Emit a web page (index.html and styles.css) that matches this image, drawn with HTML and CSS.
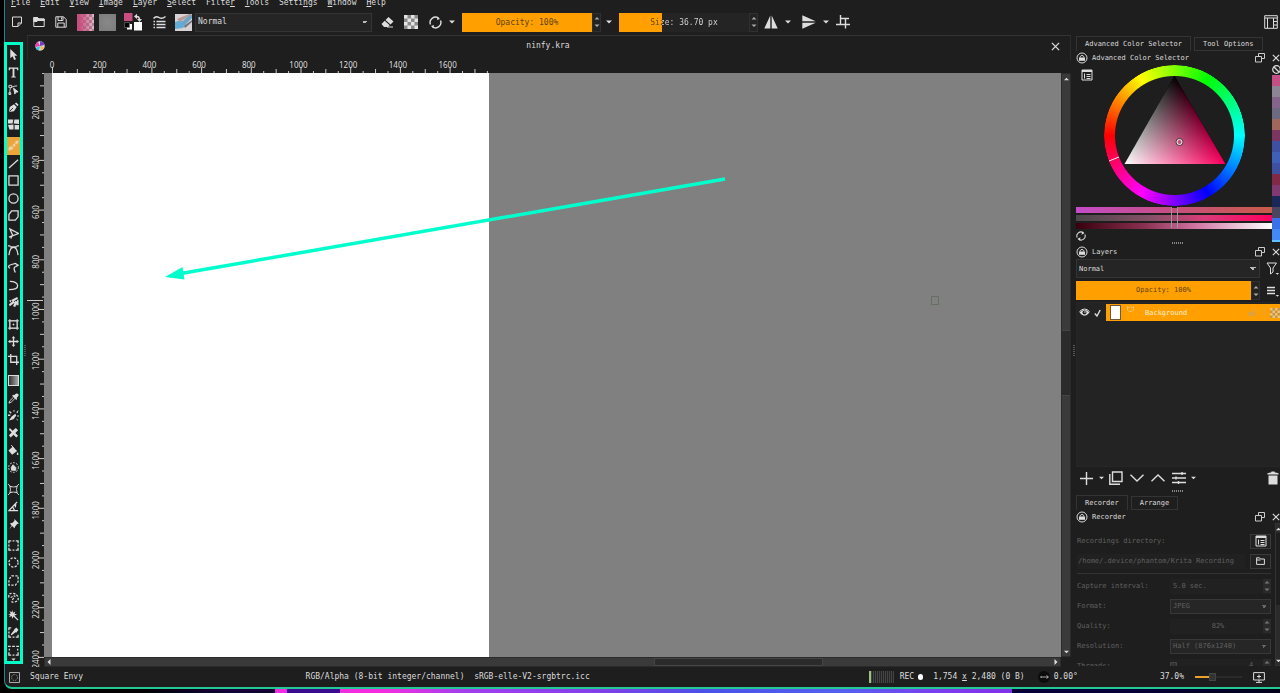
FILE: index.html
```html
<!DOCTYPE html>
<html lang="en">
<head>
<meta charset="utf-8">
<title>ninfy.kra</title>
<link rel="stylesheet" href="styles.css">
</head>
<body>
<svg class="defs" aria-hidden="true">
  <symbol id="down" viewBox="0 0 6 4"><path d="M0 0.5H6L3 3.5Z"/></symbol>
  <symbol id="spin" viewBox="0 0 8 18"><path d="M1.500 6.500H6.500L4 4Z M1.500 11.500H6.500L4 14Z"/></symbol>
  <symbol id="lock" viewBox="0 0 12 12"><circle cx="6" cy="6" r="5" fill="none" stroke="#d8d8d8"/><path d="M3 5.500H9V8.800H3Z"/><path d="M4.200 5.500V4.500Q6 2 7.800 4.500V5.500" fill="none" stroke="#d8d8d8"/></symbol>
  <symbol id="float" viewBox="0 0 10 10"><path d="M3.500 3.500V.5H9.500V5.500H6.500M.5 3.500H6.500V9H.5Z" fill="none" stroke="#ccc"/></symbol>
  <symbol id="x" viewBox="0 0 10 10"><path d="M1 1L9 9M9 1L1 9" fill="none" stroke="#ddd" stroke-width="1.400"/></symbol>
  <symbol id="listbox" viewBox="0 0 12 12"><path d="M1 1H11V11H1Z" fill="none" stroke="#ddd"/><path d="M1 1H11V3H1ZM3 4.500H4V9.500H3ZM5.500 5H9.500V6H5.500ZM5.500 7H9.500V8H5.500ZM5.500 9H9.500V10H5.500Z"/></symbol>
  <symbol id="checks" viewBox="0 0 14 14"><path d="M0 0H14V14H0Z" fill="#8a8a8a"/><path d="M0 0H3.500V3.500H0ZM7 0H10.500V3.500H7ZM3.500 3.500H7V7H3.500ZM10.500 3.500H14V7H10.500ZM0 7H3.500V10.500H0ZM7 7H10.500V10.500H7ZM3.500 10.500H7V14H3.500ZM10.500 10.500H14V14H10.500Z" fill="#e4e4e4"/></symbol>
</svg>

<div class="window">
  <nav class="menubar">
    <button><u>F</u>ile</button><button><u>E</u>dit</button><button><u>V</u>iew</button><button><u>I</u>mage</button><button><u>L</u>ayer</button><button><u>S</u>elect</button><button>Filte<u>r</u></button><button><u>T</u>ools</button><button>Setti<u>n</u>gs</button><button><u>W</u>indow</button><button><u>H</u>elp</button>
  </nav>

  <div class="toolbar">
    <button class="tb" aria-label="New"><svg width="12" height="12" viewBox="0 0 12 12" class="ln"><path d="M1.500 1H10.500V7L7 10.500H1.500ZM10.500 7H7V10.500"/></svg></button>
    <button class="tb" aria-label="Open"><svg width="12" height="12" viewBox="0 0 12 12" class="ln"><path d="M.8 10.500V1.500H4.500L6 3H11.200V10.500Z"/><path d="M.8 1.500H4.500L6 3H11.200V4.500H5L4 5.500H.8Z" fill="#ddd"/></svg></button>
    <button class="tb" aria-label="Save"><svg width="12" height="12" viewBox="0 0 12 12" class="ln"><path d="M.8.8H8.500L11.200 3.500V11.200H.8ZM3 .8V4.500H8V.8M2.800 11V7H9.200V11M6.500 1.500V3.500"/></svg></button>
    <button class="tb s2" aria-label="Gradient"><span class="gradient-swatch"></span></button>
    <button class="tb" aria-label="Pattern"><span class="pattern-swatch"></span></button>
    <button class="tb wide" aria-label="Foreground and background colors"><svg width="18" height="18" viewBox="0 0 18 18"><path d="M0 0H8.500V8H0Z" fill="#c74f7f"/><path d="M10 9H18V17.500H10Z" fill="#fff"/><path d="M3 11H8V16.500H3Z" fill="#fff"/><path d="M.5 9.500H5.500V14.500H.5Z" fill="#050505" stroke="#777" stroke-width=".6"/><path d="M12 3.500Q15.500 3 15.500 7" fill="none" stroke="#ddd" stroke-width="1.500"/><path d="M10 3.500L13 .8V6ZM13 6H18L15.500 9Z" fill="#ddd"/></svg></button>
    <button class="tb" aria-label="Edit brush settings"><svg width="13" height="14" viewBox="0 0 13 14" class="ln th"><path d="M.5 3.500Q3 .5 6 2.500T12.500 1.500M.5 6.500H2M3.500 6.500H12.500M.5 9.500H2M3.500 9.500H12.500M.5 12.500H2M3.500 12.500H12.500"/></svg></button>
    <button class="tb s2" aria-label="Brush preset"><svg width="17" height="17" viewBox="0 0 17 17"><path d="M0 0H17V17H0Z" fill="#d9d2d4"/><path d="M0 8L6 6 11 10 8 14 0 15Z" fill="#62acd8"/><path d="M7 8L14 1 17 1V4L10 11Z" fill="#6aa5c6"/><path d="M2 5L14 0H17L5 8Z" fill="#b99c98"/><path d="M9 12L17 6V8L10 14Z" fill="#7b6f7c"/></svg></button>
    <select class="combo blend" aria-label="Blending mode"><option>Normal</option></select>
    <button class="tb s4" aria-label="Eraser"><svg width="13" height="13" viewBox="0 0 13 13"><path d="M7.500 1L12.500 5.500 9.500 8.500 4.500 4ZM3.700 4.800L8.700 9.300 7 11H3L.5 8Z"/><path d="M6 11H12" stroke="#ddd"/></svg></button>
    <button class="tb s2" aria-label="Preserve alpha"><svg width="14" height="14"><use href="#checks"/></svg></button>
    <button class="tb s2" aria-label="Reload preset"><svg width="13" height="13" viewBox="0 0 13 13" class="ln th"><path d="M1.500 8.500A5.300 5.300 0 0 1 9.500 2.200M11.500 4.500A5.300 5.300 0 0 1 3.500 10.800"/><path d="M8.500 .5L11 3 8 4ZM4.500 12.500L2 10 5 9Z" fill="#ddd" stroke="none"/></svg></button>
    <button class="drop" aria-label="Preset options"><svg width="6" height="4"><use href="#down"/></svg></button>
    <label class="slider s4"><input type="range" min="0" max="100" value="100" class="full"><span class="full">Opacity: 100%</span></label>
    <button class="spin" aria-label="Step opacity"><svg width="8" height="18"><use href="#spin"/></svg></button>
    <button class="drop s2" aria-label="Opacity options"><svg width="6" height="4"><use href="#down"/></svg></button>
    <label class="slider s4"><input type="range" min="0" max="100" value="33" class="third"><span class="third">Size: 36.70 px</span></label>
    <button class="spin" aria-label="Step size"><svg width="8" height="18"><use href="#spin"/></svg></button>
    <button class="tb s2" aria-label="Mirror horizontally"><svg width="14" height="14" viewBox="0 0 14 14"><path d="M6.300 .5V13.500H.3ZM7.700 .5V13.500H13.700Z"/></svg></button>
    <button class="drop" aria-label="Mirror options"><svg width="6" height="4"><use href="#down"/></svg></button>
    <button class="tb s4" aria-label="Mirror vertically"><svg width="14" height="14" viewBox="0 0 14 14"><path d="M.3 .3L13.700 6.300H.3ZM.3 7.700H13.700L.3 13.700Z"/></svg></button>
    <button class="drop" aria-label="Vertical mirror options"><svg width="6" height="4"><use href="#down"/></svg></button>
    <button class="tb" aria-label="Wrap around"><svg width="14" height="14" viewBox="0 0 14 14" class="ln th"><path d="M4.500 3.500H9.500V13.500M4.500 0V9.500H14M0 9.500H4.500M7 3.500H13"/></svg></button>
    <button class="tb last" aria-label="Workspaces"><svg width="14" height="14" viewBox="0 0 14 14" class="ln"><path d="M.7 .7H13.300V13.300H.7ZM.7 3H13.300M3.500 3V13M9.500 3V13M9.500 6.500H13M9.500 10H13"/></svg></button>
  </div>

  <div class="main">
    <div class="toolbox">
      <button aria-label="Select shapes"><svg viewBox="0 0 12 12"><path d="M2.500 0V10L5 8 6.800 12 8.700 11.200 7 7.300H10.200Z"/></svg></button>
      <button aria-label="Text"><svg viewBox="0 0 12 12"><path d="M.8 .5H11.200V3.500H10L9.500 2H7V10L8.500 10.500V11.500H3.500V10.500L5 10V2H2.500L2 3.500H.8Z"/></svg></button>
      <button aria-label="Edit shapes"><svg viewBox="0 0 12 12" class="ln"><path d="M2 11V7Q2 2.500 10 2M1 1.500H4V4H1ZM1 9.500H3V11.500H1Z"/><path d="M6 4.500L11 8.500 8.500 9 7.500 11Z" fill="#ddd"/></svg></button>
      <button aria-label="Calligraphy"><svg viewBox="0 0 12 12"><path d="M1 11L2 5.500 6.500 2.500 9.500 5.500 6.500 10ZM7.500 1.500L9 .5 11.500 3 10.500 4.500Z"/><path d="M1.500 10.500L5.500 6.500" stroke="#222"/></svg></button>
      <button aria-label="Lazy brush"><svg viewBox="0 0 12 12"><path d="M0 .5H5.800L5 5H0ZM7 .5H12V5.500L6.200 5ZM0 6.500L6 6V11.500H1.500ZM7.200 6.500H12V11.500H7.200Z"/></svg></button>
      <hr>
      <button class="active" aria-label="Freehand brush"><svg viewBox="0 0 12 12"><path d="M.5 11.500Q0 7 3.500 6.500L6 8.500Q5.500 11.500.5 11.500ZM4.500 5.500L7 3.500 8.500 5.500 6.800 7.800ZM7.500 3Q8 0 11.500.5 12 3.500 9 5Z" fill="#efd0a0"/></svg></button>
      <button aria-label="Line"><svg viewBox="0 0 12 12" class="ln th"><path d="M1 11L11 2"/></svg></button>
      <button aria-label="Rectangle"><svg viewBox="0 0 12 12" class="ln th"><path d="M1 1H11V11H1Z"/></svg></button>
      <button aria-label="Ellipse"><svg viewBox="0 0 12 12" class="ln th"><circle cx="6" cy="6" r="5"/></svg></button>
      <button aria-label="Polygon"><svg viewBox="0 0 12 12" class="ln th"><path d="M4 1H11V7.500L8 11H1V5Z"/></svg></button>
      <button aria-label="Polyline"><svg viewBox="0 0 12 12" class="ln th"><path d="M3 11.500L5 7.500 2 1 11.500 6 1 10"/></svg></button>
      <button aria-label="Bezier curve"><svg viewBox="0 0 12 12" class="ln th"><path d="M1 11Q2 2.500 6 2.500T11 11M0 1H2.500M9.500 1H12M2 2H10"/></svg></button>
      <button aria-label="Freehand path"><svg viewBox="0 0 12 12" class="ln th"><path d="M2 7Q-1 4 3 3L8 1.500 11 3.500 8.500 5Q5 5.500 8 11.500"/></svg></button>
      <button aria-label="Dynamic brush"><svg viewBox="0 0 12 12" class="ln th"><path d="M2 1.500Q10 1.500 10.500 6T1 10.500"/></svg></button>
      <button aria-label="Multibrush"><svg viewBox="0 0 12 12"><path d="M4 3L10 0 11 2 5 5.500ZM1 8L6 4 7.500 6 2 10ZM5.500 10L8 4 10 5 8 11ZM9 9L10 3 11.500 3V9ZM1 4L4 3 3 6Z"/></svg></button>
      <hr>
      <button aria-label="Transform"><svg viewBox="0 0 12 12" class="ln"><path d="M2 2H10V10H2ZM0 2H12M0 10H12M2 0V12M10 0V12M5 6H7M6 5V7"/></svg></button>
      <button aria-label="Move"><svg viewBox="0 0 12 12"><path d="M6 0L8 2.500H6.700V5.300H9.500V4L12 6 9.500 8V6.700H6.700V9.500H8L6 12 4 9.500H5.300V6.700H2.500V8L0 6 2.500 4V5.300H5.300V2.500H4Z"/></svg></button>
      <button aria-label="Crop"><svg viewBox="0 0 12 12" class="ln th"><path d="M3 0V9H12M0 2.500H9.500V12"/></svg></button>
      <hr>
      <button aria-label="Gradient"><span class="gradient-tool"></span></button>
      <button aria-label="Color sampler"><svg viewBox="0 0 12 12"><path d="M6.500 2.500L9 .5Q12 .3 11.500 3L9.500 5.500 10 6.500 9 7.500 4.500 3 5.500 2Z"/><path d="M6 4.500L2 8.500 1 11 3.500 10 7.500 6" fill="none" stroke="#ddd"/></svg></button>
      <button aria-label="Colorize mask"><svg viewBox="0 0 12 12"><path d="M1 11.500L4 7 8 4 9 6 6 10ZM9 2.500L11.500 0 10.500 3.500ZM0 5H2.500V6.500H0ZM2 1L4 3 3 4 1 2ZM6 0H7V2H6ZM10 6H12V7H10ZM9 9L11 11 10 11.500Z"/></svg></button>
      <button aria-label="Smart patch"><svg viewBox="0 0 12 12"><path d="M2 1L5 4 8.500 1 11 3.500 8 6.500 11 9.500 9 11.500 6 8.500 3 11.500 1 9 4 6 1 3Z"/></svg></button>
      <button aria-label="Fill"><svg viewBox="0 0 12 12"><path d="M5 2L10 6.500 4.500 10.500 .5 6ZM10.500 7.500Q12.500 11 10.500 11T10.500 7.500Z"/><path d="M3.500 0L7 4" stroke="#ddd"/></svg></button>
      <button aria-label="Enclose and fill"><svg viewBox="0 0 12 12" class="ln"><circle cx="6" cy="6" r="5.300" stroke-dasharray="2 1.400"/><path d="M3.500 6L5.500 3 8.500 6V9H4Z" fill="#ddd"/></svg></button>
      <hr>
      <button aria-label="Assistant"><svg viewBox="0 0 12 12" class="ln"><path d="M0 0L3.500 3.500M12 0L8.500 3.500M0 12L3.500 8.500M12 12L8.500 8.500M2 2.500Q6 4 10 2.500Q8.500 6 10 9.500Q6 8 2 9.500Q3.500 6 2 2.500"/></svg></button>
      <button aria-label="Measure"><svg viewBox="0 0 12 12" class="ln th"><path d="M10 1L1 10.500H11M8.500 2.500L8 7M5 6.500L7 10"/></svg></button>
      <button aria-label="Reference images"><svg viewBox="0 0 12 12"><path d="M7 0L12 5 10 5.500 8 8 7 10 4.500 7.500 1 11.500 4 7 2 5 5 4 7 2Z"/></svg></button>
      <hr>
      <button aria-label="Rectangular selection"><svg viewBox="0 0 12 12" class="ln th"><path d="M1 3.500V1H3.500M8.500 1H11V3.500M11 8.500V11H8.500M3.500 11H1V8.500M5 1H7M5 11H7M1 5V7M11 5V7"/></svg></button>
      <button aria-label="Elliptical selection"><svg viewBox="0 0 12 12" class="ln th"><circle cx="6" cy="6" r="5" stroke-dasharray="2.400 1.530"/></svg></button>
      <button aria-label="Polygonal selection"><svg viewBox="0 0 12 12" class="ln th"><path d="M4 1H11V7.500L8 11H1V5Z" stroke-dasharray="2.500 1.500"/></svg></button>
      <button aria-label="Freehand selection"><svg viewBox="0 0 12 12" class="ln th"><path d="M1 6Q0 1 5 1.500T11 6 7 11 6 7 3 6" stroke-dasharray="2.500 1.400"/></svg></button>
      <button aria-label="Contiguous selection"><svg viewBox="0 0 12 12"><path d="M4.500 0L5.500 3 8 1.500 7 4 10 5 7 6 11.500 10.500 10.500 11.500 6 7 4.500 9.500 4 6.500 1 8 2.500 5.500 0 4.500 3 4 1.500 1 4 2.500Z"/></svg></button>
      <button aria-label="Similar color selection"><svg viewBox="0 0 12 12" class="ln th"><path d="M1 3.500V1H3.500M11 8.500V11H8.500M3.500 11H1V8.500M5 11H7M1 5V7"/><path d="M3.500 8.500L7 4 8 5ZM7.500 3L9 1.500 10.500 3 9 5Z" fill="#ddd"/></svg></button>
      <button aria-label="Bezier selection"><svg viewBox="0 0 12 12" class="ln th"><path d="M0 1.500H3M4.500 1.500H7.500M9 1.500H12M1.500 4V6M10.500 4V6M1 8V11H3.500M5 11H7M8.500 11H11V8"/></svg></button>
      <i class="more"><svg width="5" height="3" viewBox="0 0 6 4"><use href="#down"/></svg></i>
    </div>
    <div class="grip-v narrow-grip"></div>

    <section class="document">
      <header class="doc-title">
        <svg width="10" height="10" viewBox="0 0 10 10"><circle cx="5" cy="5" r="4.700" fill="#ddd"/><path d="M5 5V.3A4.700 4.700 0 0 1 9.500 4Z" fill="#7a3bc4"/><path d="M5 5L.5 6A4.700 4.700 0 0 1 3 .8Z" fill="#e83eae"/><path d="M5 5L9.500 6A4.700 4.700 0 0 1 6 9.600Z" fill="#e9b85f"/><path d="M5 5L4 9.600A4.700 4.700 0 0 1 .8 7Z" fill="#37c6e6"/></svg>
        <span>ninfy.kra</span>
        <button aria-label="Close document"><svg width="9" height="9"><use href="#x"/></svg></button>
      </header>
      <svg class="ruler-h" id="ruler-h"></svg>
      <svg class="ruler-v" id="ruler-v"></svg>
      <div class="canvas">
        <div class="page"></div>
        <svg class="overlay"><path d="M681 106L134 201" stroke="#0fc" stroke-width="3.500"/><path d="M121 204L138.500 194 140.500 206.500Z" fill="#0fc"/><path d="M887.500 223.500H894.500V231.500H887.500Z" fill="none" stroke="#63705f"/></svg>
      </div>
      <div class="scroll-v"><svg width="5" height="4" viewBox="0 0 6 4"><path d="M0 3.500H6L3 .5Z"/></svg><i></i><svg width="5" height="4"><use href="#down"/></svg></div>
      <div class="scroll-h"><svg width="4" height="6" viewBox="0 0 4 6"><path d="M3.500 0V6L.5 3Z"/></svg><i></i><svg width="4" height="6" viewBox="0 0 4 6"><path d="M.5 0V6L3.500 3Z"/></svg></div>
    </section>
    <div class="grip-v wide-grip"></div>

    <aside class="dock">
      <div class="tabs"><button class="on">Advanced Color Selector</button><button>Tool Options</button></div>
      <div class="dock-title"><svg width="12" height="12"><use href="#lock"/></svg><span>Advanced Color Selector</span><button aria-label="Float"><svg width="10" height="10"><use href="#float"/></svg></button><button aria-label="Close"><svg width="8" height="8"><use href="#x"/></svg></button></div>
      <div class="selector">
        <div class="selector-main">
          <button class="selector-config" aria-label="Color selector settings"><svg width="12" height="12"><use href="#listbox"/></svg></button>
          <div class="wheel">
            <div class="ring"></div>
            <svg viewBox="0 0 141 141" width="141" height="141">
              <defs>
                <linearGradient id="gh" gradientUnits="userSpaceOnUse" x1="45" y1="56" x2="121" y2="99"><stop stop-color="#000"/><stop offset="1" stop-color="#ff0060"/></linearGradient>
                <linearGradient id="gw" gradientUnits="userSpaceOnUse" x1="96" y1="56" x2="20" y2="99"><stop stop-color="#000"/><stop offset="1" stop-color="#fff"/></linearGradient>
              </defs>
              <g class="triangle"><path d="M70.500 11L20.500 99H121.500Z" fill="url(#gh)"/><path d="M70.500 11L20.500 99H121.500Z" fill="url(#gw)" class="add"/></g>
              <circle cx="75.500" cy="77" r="3.500" fill="none" stroke="#444"/><circle cx="75.500" cy="77" r="2.500" fill="none" stroke="#eee"/>
              <path d="M5 96L15 92" stroke="#eee"/>
            </svg>
          </div>
          <div class="bars"><i class="b1"></i><i class="b2"></i><i class="b3"></i><b></b></div>
          <button class="refresh" aria-label="Refresh"><svg width="10" height="10" viewBox="0 0 13 13" class="ln th"><path d="M1.500 8.500A5.300 5.300 0 0 1 9.500 2.200M11.500 4.500A5.300 5.300 0 0 1 3.500 10.800"/><path d="M8.500 .5L11 3 7 5ZM4.500 12.500L2 10 6 8Z" fill="#ddd" stroke="none"/></svg></button>
        </div>
        <div class="history">
          <svg width="9" height="9" viewBox="0 0 10 10" class="ln th"><circle cx="5" cy="5" r="4.200"/><path d="M2 2L8 8"/></svg>
          <i class="c1"></i><i class="c2"></i><i class="c3"></i><i class="c4"></i><i class="c5"></i><i class="c6"></i><i class="c7"></i><i class="c8"></i><i class="c7"></i><i class="c9"></i><i class="c10"></i><i class="c11"></i><i class="c12"></i><i class="c13"></i><i class="c14"></i><i class="c15"></i>
        </div>
      </div>
      <div class="grip-h"></div>

      <div class="dock-title"><svg width="12" height="12"><use href="#lock"/></svg><span>Layers</span><button aria-label="Float"><svg width="10" height="10"><use href="#float"/></svg></button><button aria-label="Close"><svg width="8" height="8"><use href="#x"/></svg></button></div>
      <div class="row"><select class="combo" aria-label="Layer blending mode"><option>Normal</option></select><button class="side" aria-label="Filter layers"><svg width="13" height="13" viewBox="0 0 13 13" class="ln"><path d="M1 1H10.500L7 6V10L4.500 12V6Z"/><path d="M9.500 11H13L11.500 12.800Z" fill="#ddd" stroke="none"/></svg></button></div>
      <div class="row"><label class="slider"><input type="range" min="0" max="100" value="100" class="full"><span class="full">Opacity: 100%</span></label><button class="spin" aria-label="Step layer opacity"><svg width="8" height="18"><use href="#spin"/></svg></button><button class="side" aria-label="Layer view options"><svg width="13" height="13" viewBox="0 0 13 13" class="ln th"><path d="M1 3.500H9M1 6.500H9M1 9.500H9"/><path d="M9.500 11H13L11.500 12.800Z" fill="#ddd" stroke="none"/></svg></button></div>
      <div class="layers">
        <div class="layer">
          <svg width="11" height="9" viewBox="0 0 11 9"><path d="M.5 4.500Q5.500-1 10.500 4.500 5.500 11 .5 4.500Z"/><circle cx="5.500" cy="4.500" r="2" fill="#222"/><circle cx="6" cy="4" r=".8"/><path d="M.5 3.500Q5.500-1.500 10.500 3.500" fill="none" stroke="#ddd"/></svg>
          <svg width="7" height="8" viewBox="0 0 7 8" class="ln th"><path d="M.8 4.500L3 7 6.200 1"/></svg>
          <div class="layer-name"><i class="thumb"></i><svg width="7" height="6" viewBox="0 0 7 6" class="badge"><path d="M.5 .5L2 2 3.500.5 5 2 6.500.5V4L5 5.500H2L.5 4Z"/></svg><span>Background</span><svg width="9" height="9" viewBox="0 0 9 9" class="faint"><path d="M1 4H8V8H1ZM6 1H8V4H6Z"/></svg><svg width="8" height="8" viewBox="0 0 8 8" class="badge pale"><path d="M1 1H5.500V5.500H1ZM5 5L7.500 7.500"/></svg><svg width="10" height="10" class="fade"><use href="#checks"/></svg></div>
        </div>
      </div>
      <div class="layer-tools">
        <button aria-label="Add layer"><svg width="13" height="13" viewBox="0 0 13 13" class="ln th"><path d="M6.500 0V13M0 6.500H13"/></svg></button>
        <button aria-label="Add options" class="narrow"><svg width="5" height="4"><use href="#down"/></svg></button>
        <button aria-label="Duplicate"><svg width="14" height="14" viewBox="0 0 14 14" class="ln th"><path d="M3.500 1H13V10.500H3.500ZM.8 3V13.200H11"/></svg></button>
        <button aria-label="Move down"><svg width="14" height="8" viewBox="0 0 14 8" class="ln th"><path d="M.5 .8L7 7 13.500 .8"/></svg></button>
        <button aria-label="Move up"><svg width="14" height="8" viewBox="0 0 14 8" class="ln th"><path d="M.5 7.200L7 1 13.500 7.200"/></svg></button>
        <button aria-label="Properties"><svg width="14" height="12" viewBox="0 0 14 12" class="ln th"><path d="M0 1.500H14M0 6H14M0 10.500H14M10 0V3M4 4.500V7.500M6.500 9V12"/></svg></button>
        <button aria-label="Property options" class="narrow"><svg width="5" height="4"><use href="#down"/></svg></button>
        <button aria-label="Delete" class="trash"><svg width="12" height="14" viewBox="0 0 12 14"><path d="M.3 2.500Q2 1.500 4 1.500L4.500.5H7.500L8 1.500Q10 1.500 11.700 2.500V3.500H.3ZM1.500 4.500H10.500V13.500H1.500Z"/></svg></button>
      </div>
      <div class="grip-h low"></div>

      <div class="tabs"><button class="on">Recorder</button><button>Arrange</button></div>
      <div class="dock-title"><svg width="12" height="12"><use href="#lock"/></svg><span>Recorder</span><button aria-label="Float"><svg width="10" height="10"><use href="#float"/></svg></button><button aria-label="Close"><svg width="8" height="8"><use href="#x"/></svg></button></div>
      <div class="recorder">
        <form>
          <div class="line"><label for="dir">Recordings directory:</label><button type="button" class="box" aria-label="Manage recordings"><svg width="12" height="12"><use href="#listbox"/></svg></button></div>
          <div class="line"><input id="dir" type="text" value="/home/.device/phantom/Krita Recording" disabled><button type="button" class="box" aria-label="Browse"><svg width="9" height="8" viewBox="0 0 9 8" class="ln"><path d="M.6 7.400V.8H3.500L4.500 2H8.400V7.400ZM.6 3H4.500"/></svg></button></div>
          <hr>
          <div class="line"><label for="interval">Capture interval:</label><div class="field"><input id="interval" type="text" value="5.0 sec." disabled><svg width="8" height="14" viewBox="0 2 8 14" class="mini"><use href="#spin" width="8" height="18"/></svg></div></div>
          <div class="line"><label for="format">Format:</label><select id="format" class="combo dim" disabled><option>JPEG</option></select></div>
          <div class="line"><label for="quality">Quality:</label><div class="field"><input id="quality" type="text" class="mid" value="82%" disabled><svg width="8" height="14" viewBox="0 2 8 14" class="mini"><use href="#spin" width="8" height="18"/></svg></div></div>
          <div class="line"><label for="res">Resolution:</label><select id="res" class="combo dim" disabled><option>Half (876x1240)</option></select></div>
          <div class="line"><label for="threads">Threads:</label><div class="field"><input id="threads" type="range" value="0" disabled><output>4</output><svg width="8" height="14" viewBox="0 2 8 14" class="mini"><use href="#spin" width="8" height="18"/></svg></div></div>
        </form>
        <div class="rec-scroll"><svg width="5" height="4" viewBox="0 0 6 4"><path d="M0 3.500H6L3 .5Z"/></svg><i></i><svg width="5" height="4"><use href="#down"/></svg></div>
      </div>
    </aside>
  </div>

  <footer class="status">
    <svg width="11" height="11" viewBox="0 0 11 11"><path d="M.5 .5H10.500V10.500H.5Z" fill="none" stroke="#aaa"/><circle cx="5.500" cy="5.500" r="3" fill="none" stroke="#888" stroke-dasharray="1.500 1"/></svg>
    <span class="preset">Square Envy</span>
    <span class="profile">RGB/Alpha (8-bit integer/channel)  sRGB-elle-V2-srgbtrc.icc</span>
    <span class="meter"></span>
    <span class="rec">REC</span><i class="dot"></i>
    <span class="dims">1,754 <u>x</u> 2,480 (0 B)</span>
    <svg width="12" height="12" viewBox="0 0 12 12"><circle cx="6" cy="6" r="6" fill="#0c0c0c"/><path d="M3 6H10M3 5V7M8.500 4.500L10.500 6 8.500 7.500" fill="none" stroke="#ccc" stroke-width=".8"/></svg>
    <span class="angle">0.00°</span>
    <span class="zoom">37.0%</span>
    <input type="range" class="zoom-range" value="35" aria-label="Zoom">
    <button class="screen" aria-label="Fit to screen"><svg width="12" height="11" viewBox="0 0 12 11" class="ln"><path d="M.6 .6H11.400V8H.6ZM3 10.400H9M6 8V10M4 4.500H8M6 2.500V6.500"/></svg></button>
  </footer>
</div>
<div class="wallpaper"></div>
<script src="script.js"></script>
</body>
</html>
```

FILE: styles.css
```css
* { box-sizing: border-box; }
body {
  margin: 0; height: 100vh; overflow: hidden; background: #000;
  display: flex; flex-direction: column; color: #dcdcdc;
  font: 8px/12px "DejaVu Sans Mono", monospace;
}
.defs { position: absolute; width: 0; height: 0; }
svg { fill: #ddd; flex: none; display: block; }
.ln { fill: none; stroke: #ddd; stroke-width: 1; }
.th { stroke-width: 1.4; }
button, input, select { font: inherit; color: inherit; margin: 0; padding: 0; border: 0; background: none; border-radius: 0; }
button { display: flex; align-items: center; justify-content: center; flex: none; white-space: nowrap; }
i { display: block; }

.window {
  flex: 1; min-height: 0; margin-left: 4px; background: #1e1e1e;
  border-left: 1px solid #2b7f93; border-bottom: 2px solid #22c994;
  border-bottom-left-radius: 8px; display: flex; flex-direction: column;
}
.wallpaper {
  height: 4px; flex: none;
  background: linear-gradient(90deg, #000 0 11%, #16003c 18%, #12002e 21.5%, #f42ce0 21.5% 22.4%, #3a0a90 22.4% 26.6%, #f42ce0 26.6% 30%, #a63df0 36%, #7a40e8 48%, #4a50e8 55%, #5560f0 66%, #7a3df0 73%, #8030e8 79.1%, #05003a 79.1% 88%, #000018);
}

.menubar { display: flex; gap: 10px; height: 16px; margin-top: -5px; padding-left: 6px; flex: none; }
.toolbar { display: flex; align-items: center; height: 24px; padding: 0 0 2px 1px; flex: none; }
.tb { width: 22px; height: 20px; }
.tb.wide { width: 30px; }
.s2 { margin-left: 2px; }
.s4 { margin-left: 4px; }
.last { margin-left: auto; margin-right: -2px; }
.drop { width: 12px; height: 20px; }
.gradient-swatch, .pattern-swatch { width: 17px; height: 17px; }
.gradient-swatch { background: linear-gradient(90deg, #c74f7f 15%, #c74f7f55), repeating-conic-gradient(#eee 0 25%, #999 0 50%) 0 0 / 6px 6px; }
.pattern-swatch { background: radial-gradient(circle, #888, #7c7c7c); }
.combo {
  appearance: none; height: 19px; border: 1px solid #343434; padding: 0 2px; color: #ddd;
  background-color: #252525; background-repeat: no-repeat;
  background-image: linear-gradient(45deg, transparent 50%, #bbb 50%), linear-gradient(-45deg, transparent 50%, #bbb 50%);
  background-size: 3px 3px; background-position: right 6px center, right 3px center;
}
.blend { width: 177px; margin-left: 1px; }
.toolbar .slider { width: 130px; }
.slider { position: relative; height: 19px; display: block; flex: none; }
.slider input { appearance: none; width: 100%; height: 19px; display: block; }
.slider input::-webkit-slider-thumb { appearance: none; width: 0; height: 0; }
.slider input.full { background: #ffa000; }
.slider input.third { background: linear-gradient(90deg, #ffa000 33%, #242424 33%); }
.slider span { position: absolute; inset: 0; line-height: 19px; text-align: center; pointer-events: none; color: #5e420e; }
.slider span.third { background: linear-gradient(90deg, #5e420e 33%, #dcdcdc 33%); background-clip: text; color: transparent; }
.spin { width: 9px; height: 19px; border: 1px solid #303030; background: #232323; }
.spin svg { fill: #aaa; }

.main { flex: 1; min-height: 0; display: flex; }
.toolbox {
  width: 19px; margin: 7px 0 3px -1px; border: 3px solid #00ffc8; flex: none; padding-top: 1px;
  display: flex; flex-direction: column; align-items: stretch;
}
.toolbox button { flex: 1 1 0; min-height: 0; }
.toolbox button svg { width: 11px; height: 11px; }
.toolbox hr { width: 100%; height: 4px; margin: 0; border: 0; flex: none; }
.toolbox .active { background: #eca53b; }
.gradient-tool { width: 11px; height: 11px; border: 1px solid #ddd; background: linear-gradient(90deg, #333, #aaa); }
.more { height: 2px; display: flex; justify-content: center; align-items: center; }
.grip-v { width: 3px; flex: none; display: flex; align-items: center; justify-content: center; }
.grip-v::before { content: ""; width: 2px; height: 12px; background: repeating-linear-gradient(#555 0 1px, transparent 1px 2px); }
.narrow-grip { width: 4px; }
.wide-grip { width: 5px; }
.grip-h { height: 4px; flex: none; display: flex; align-items: center; justify-content: center; }
.grip-h::before { content: ""; width: 12px; height: 2px; background: repeating-linear-gradient(90deg, #888 0 1px, transparent 1px 2px); }
.low { margin-bottom: 2px; }

.document {
  flex: 1; min-width: 0; display: grid;
  grid-template-columns: 17px 1fr 10px; grid-template-rows: 24px 13px 1fr 10px;
  border-top: 1px solid #343434;
}
.doc-title { grid-column: 1 / -1; display: flex; align-items: center; padding: 0 10px 4px 7px; border-left: 1px solid #2b2b2b; border-right: 1px solid #2b2b2b; }
.doc-title span { flex: 1; text-align: center; }
.ruler-h, .ruler-v { font: 8px "Noto Sans", sans-serif; }
.ruler-h { grid-column: 1 / -1; grid-row: 2; width: 100%; height: 13px; }
.ruler-v { grid-column: 1; grid-row: 3 / 5; width: 17px; height: 100%; }
.ruler-h path, .ruler-v path { stroke: #ccc; fill: none; }
.canvas { grid-column: 2; grid-row: 3; background: #808080; position: relative; padding-left: 8px; overflow: hidden; min-height: 0; }
.page { width: 437px; height: 100%; background: #fff; }
.overlay { position: absolute; inset: 0; width: 100%; height: 100%; }
.scroll-v { grid-column: 3; grid-row: 3; background: #3a3a3a; border: 1px solid #2b2b2b; display: flex; flex-direction: column; align-items: center; padding: 3px 0 2px; }
.scroll-v i { margin: 249px 0 auto; width: 8px; height: 66px; background: #2b2b2b; border: 1px solid #454545; border-width: 1px 0; }
.scroll-h { grid-column: 2; grid-row: 4; background: #3a3a3a; border: 1px solid #2b2b2b; display: flex; align-items: center; padding: 0 2px; }
.scroll-h i { width: 169px; height: 8px; background: #2b2b2b; border: 1px solid #454545; margin: 0 auto 0 59.6%; }

.dock { width: 204px; flex: none; display: flex; flex-direction: column; padding: 1px 0; min-height: 0; font-size: 7px; }
.tabs { display: flex; gap: 3px; height: 15px; flex: none; }
.tabs button { border: 1px solid #343434; padding: 0 8px; height: 14px; margin-top: 1px; }
.tabs .on { border-bottom: 0; height: 15px; margin-top: 0; }
.dock-title { display: flex; align-items: center; height: 13px; flex: none; }
.dock-title span { margin: 0 auto 0 4px; }
.dock-title button { margin-left: 7px; }
.selector { height: 177px; flex: none; display: flex; }
.selector-main { flex: 1; position: relative; display: flex; flex-direction: column; align-items: center; padding-top: 1px; }
.selector-config { position: absolute; left: 5px; top: 5px; }
.wheel { position: relative; width: 141px; height: 141px; }
.ring {
  position: absolute; inset: 0; border-radius: 50%;
  background: conic-gradient(from 270deg, red, yellow, lime, cyan, blue, magenta, red);
  mask: radial-gradient(circle closest-side, transparent 59px, #000 60px, #000 70px, transparent 71px);
}
.wheel svg { position: relative; }
.triangle { isolation: isolate; }
.add { mix-blend-mode: plus-lighter; }
.bars { width: 100%; display: flex; flex-direction: column; gap: 1px; position: relative; margin-top: 1px; }
.bars i { height: 6px; margin-bottom: 1px; }
.bars b { position: absolute; left: 50%; top: 0; width: 7px; height: 21px; margin-left: -3px; border: solid #999; border-width: 0 1px; background: repeating-linear-gradient(#222 0 1px, transparent 1px 7px); }
.b1 { background: linear-gradient(90deg, #c44cc8, #c74f7f 50%, #c85c48); }
.b2 { background: linear-gradient(90deg, #484848, #8a5068 40%, #d83c78 65%, #ff0060); }
.b3 { background: linear-gradient(90deg, #38000e, #8a3050 35%, #d070a0 60%, #fff); }
.refresh { margin: 1px auto 0 0; }
.history { width: 8px; padding-top: 1px; }
.history i { height: 11px; }
.history svg { margin-bottom: 1px; }
.c1 { background: #c44f84; } .c2 { background: #8e8594; } .c3 { background: #84648a; } .c4 { background: #6c6a80; }
.c5 { background: #a0685c; } .c6 { background: #7a3560; } .c7 { background: #4050a0; } .c8 { background: #4060b8; }
.c9 { background: #802a48; } .c10 { background: #803a72; } .c11 { background: #1a2858; } .c12 { background: #4a4560; }
.c13 { background: #3a70e8; } .c14 { background: #4488f5; } .c15 { background: #60c0ff; }
.history .c15 { height: 2px; }

.row { display: flex; margin-top: 1px; padding-bottom: 2px; flex: none; }
.row .combo { width: 184px; }
.row .slider { width: 175px; }
.side { width: 13px; margin-left: 6px; }
.layers { flex: 1; min-height: 0; background: #232323; border: 1px solid #262626; border-right: 0; padding-top: 1px; }
.layer { display: flex; align-items: center; gap: 4px; height: 17px; padding-left: 2px; }
.layer-name { flex: 1; height: 17px; margin-left: 1px; background: #ffa000; color: #fff0d8; display: flex; align-items: center; gap: 3px; padding-left: 4px; }
.layer-name span { margin: 0 auto 0 8px; }
.thumb { width: 11px; height: 15px; background: #fff; border: 1px solid #6d5a3a; }
.badge { fill: none; stroke: #eec070; }
.pale { stroke: #e8a42c; }
.layer-name .thumb + .badge { margin: 0 0 8px 3px; }
.faint { fill: #e0a040; }
.fade { opacity: .5; }
.layer-tools { display: flex; align-items: center; height: 22px; flex: none; }
.layer-tools button { width: 21px; height: 20px; }
.layer-tools .narrow { width: 8px; }
.layer-tools .trash { margin-left: auto; width: 15px; }

.recorder { height: 143px; flex: none; overflow: hidden; display: flex; color: #606060; }
.recorder form { flex: 1; padding: 8px 4px 0 1px; min-width: 0; }
.recorder hr { margin: 2px 0; border: 0; border-top: 1px solid #333; }
.line { display: flex; align-items: center; height: 20px; }
.line > label { flex: 1; white-space: nowrap; }
.box { width: 21px; height: 15px; border: 1px solid #3a3a3a; background: #222; }
.line > input { flex: 1; min-width: 0; height: 15px; margin-right: 5px; background: #212121; padding: 0 1px; }
.field, .line .combo { width: 101px; height: 15px; flex: none; }
.field { display: flex; background: #212121; }
.field input { flex: 1; min-width: 0; padding-left: 3px; }
.field .mid { text-align: center; }
.combo.dim {
  color: #606060; opacity: 1; border-color: #383838; background-color: #262626;
  background-image: linear-gradient(45deg, transparent 50%, #666 50%), linear-gradient(-45deg, transparent 50%, #666 50%);
}
.mini { fill: #777; background: #2b2b2b; }
.field input[type=range] { appearance: none; height: 1px; background: #333; margin: 7px 16px 0 0; padding: 0; }
.field input[type=range]::-webkit-slider-thumb { appearance: none; width: 7px; height: 8px; background: #333; border: 1px solid #444; }
.field output { width: 14px; }
.rec-scroll { width: 7px; background: #2b2b2b; border: 1px solid #333; display: flex; flex-direction: column; align-items: center; padding: 3px 0 2px; margin-right: -2px; }
.rec-scroll i { flex: 1; width: 6px; margin: 2px 0 54px; background: #1e1e1e; }

.status { height: 20px; flex: none; display: flex; align-items: center; padding: 0 15px 0 4px; white-space: pre; }
.preset { margin-left: 10px; flex: 275; }
.profile { flex: 562; }
.meter { width: 25px; height: 12px; border-left: 2px solid #9bc47d; background: repeating-linear-gradient(90deg, #444 0 1px, #252525 1px 2px); margin-right: 6px; }
.dot { width: 5px; height: 6px; border-radius: 3px; background: #fff; margin: 0 10px 0 4px; }
.dims { margin-right: 13px; }
.angle { margin-left: 4px; flex: 106; }
.zoom { margin-right: 11px; }
.zoom-range { appearance: none; width: 47px; height: 2px; background: linear-gradient(90deg, #eba12f 34%, #2b2b2b 34%); }
.zoom-range::-webkit-slider-thumb { appearance: none; width: 7px; height: 8px; background: #333; border: 1px solid #444; }
.screen { margin-left: 11px; }
```

FILE: script.js
```js
// Ruler ticks: one step is 50 document pixels, labels every 200.
const STEP = 12.425;

function ticks(count, origin, limit, segment) {
  let path = "";
  for (let i = 0; i <= count; i++) {
    const at = origin + i * STEP;
    if (at < 0 || at > limit) continue;
    path += segment(at, i % 4 === 0 ? 6 : i % 2 === 0 ? 4 : 2);
  }
  return `<path d="${path}"/>`;
}

// The page starts 25px into the horizontal ruler.
let across = ticks(35, 25.5, 462, (x, size) => `M${x} 13V${13 - size}`);
for (let n = 0; n <= 8; n++) {
  across += `<text x="${(n ? 23 : 25) + n * 4 * STEP}" y="8" text-anchor="middle">${n * 200}</text>`;
}
document.getElementById("ruler-h").innerHTML = across;

// The page's top edge is scrolled 12px above the vertical ruler.
let down = ticks(50, -12, 586, (y, size) => `M17 ${y}H${17 - size}`);
for (let n = 1; n <= 12; n++) {
  const y = -10 + n * 4 * STEP;
  down += `<text transform="translate(12 ${y}) rotate(-90)" text-anchor="middle">${n * 200}</text>`;
}
down += '<path d="M0 227.500H16"/>';
document.getElementById("ruler-v").innerHTML = down;
```
